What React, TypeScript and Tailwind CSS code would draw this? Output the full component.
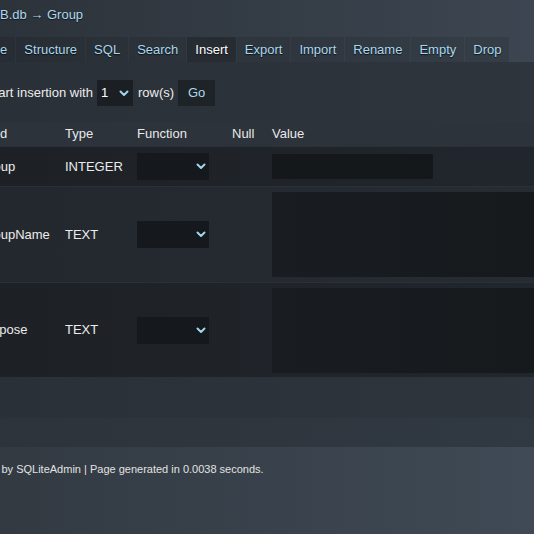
import React from "react";

const Chevron = () => (
  <svg width="10" height="7" viewBox="0 0 10 7" fill="none">
    <path d="M1.5 1.5 L5 5 L8.5 1.5" stroke="#a3d4ea" strokeWidth="2" strokeLinecap="round" strokeLinejoin="round" />
  </svg>
);

const FnSelect = () => (
  <div className="w-[72px] h-[27px] bg-[#15181c] flex items-center justify-end pr-[3px]">
    <Chevron />
  </div>
);

const tabs = ["Browse", "Structure", "SQL", "Search", "Insert", "Export", "Import", "Rename", "Empty", "Drop"];

const rows = [
  { name: "Group", type: "INTEGER", h: "h-[40px]", bg: "bg-gradient-to-r from-[#1d2126] to-[#22272d]", big: false },
  { name: "GroupName", type: "TEXT", h: "h-[96px]", bg: "bg-gradient-to-r from-[#23282e] to-[#262c32]", big: true },
  { name: "Purpose", type: "TEXT", h: "h-[95px]", bg: "bg-gradient-to-r from-[#1d2126] to-[#22272d]", big: true },
];

export default function App() {
  return (
    <div className="w-[534px] h-[534px] overflow-hidden font-['Liberation_Sans',Arial,sans-serif] text-[13px] bg-[#2b3139]">
      <div className="-ml-[44px] w-[640px] h-full flex flex-col">
        {/* header */}
        <div className="h-[62px] flex flex-col bg-gradient-to-r from-[#2b3138] to-[#3e4854]">
          <div className="h-[37px] pl-[44px] pt-[7px] leading-[16px] text-[#acd9ee] [text-shadow:0_1px_1px_rgba(0,0,0,0.6)]">
            B.db → Group
          </div>
          <div className="flex gap-px h-[25px]">
            {tabs.map((t) => (
              <div
                key={t}
                className={
                  t === "Insert"
                    ? "px-[8px] flex items-center bg-[#272c33] text-white [text-shadow:0_1px_1px_rgba(0,0,0,0.6)]"
                    : "px-[8px] flex items-center bg-black/10 text-[#a9d8ee] [text-shadow:0_1px_1px_rgba(0,0,0,0.7)]"
                }
              >
                {t}
              </div>
            ))}
          </div>
        </div>

        {/* content */}
        <div className="h-[356px] flex flex-col bg-gradient-to-r from-[#2a3037] to-[#2e353d] text-[#ececec]">
          <div className="pt-[18px] pl-[30px] flex items-center h-[44px]">
            <div className="h-[26px] flex items-center">
              <span>Start insertion with</span>
              <div className="ml-[4px] w-[36px] h-[26px] bg-[#1b1f24] flex items-center justify-between pl-[4px] pr-[4px] text-white">
                <span>1</span>
                <Chevron />
              </div>
              <span className="ml-[5px]">row(s)</span>
              <button className="ml-[4px] w-[37px] h-[26px] bg-[#1e2328] text-[#a9d8ee] flex items-center justify-center">
                Go
              </button>
            </div>
          </div>

          <div className="mt-[16px] ml-[19px] flex flex-col">
            <div className="grid grid-cols-[86px_72px_95px_40px_1fr] h-[24px] items-center bg-[#2c333b] text-[#e8e8e8]">
              <div className="pl-[4px]">Field</div>
              <div className="pl-[4px]">Type</div>
              <div className="pl-[4px]">Function</div>
              <div className="pl-[4px]">Null</div>
              <div className="pl-[4px]">Value</div>
            </div>
            {rows.map((r) => (
              <div
                key={r.name}
                className={`grid grid-cols-[86px_72px_95px_40px_1fr] items-center border-t border-[#2a3037] ${r.h} ${r.bg}`}
              >
                <div className="pl-[4px]">{r.name}</div>
                <div className="pl-[4px]">{r.type}</div>
                <div className="pl-[4px]">
                  <FnSelect />
                </div>
                <div />
                <div className="pl-[4px]">
                  {r.big ? (
                    <div className="h-[85px] w-[400px] bg-gradient-to-r from-[#191c20] to-[#15181b]" />
                  ) : (
                    <div className="h-[25px] w-[161px] bg-[#15181b]" />
                  )}
                </div>
              </div>
            ))}
          </div>
        </div>

        {/* band */}
        <div className="h-[29px] bg-gradient-to-r from-[#2c333b] to-[#313942]" />

        {/* footer */}
        <div className="flex-1 pt-[15px] text-[11px] leading-[14px] text-[#e2e2e2] bg-gradient-to-r from-[#313840] to-[#414c58]">
          <div className="-ml-[1px]">Powered by SQLiteAdmin | Page generated in 0.0038 seconds.</div>
        </div>
      </div>
    </div>
  );
}
